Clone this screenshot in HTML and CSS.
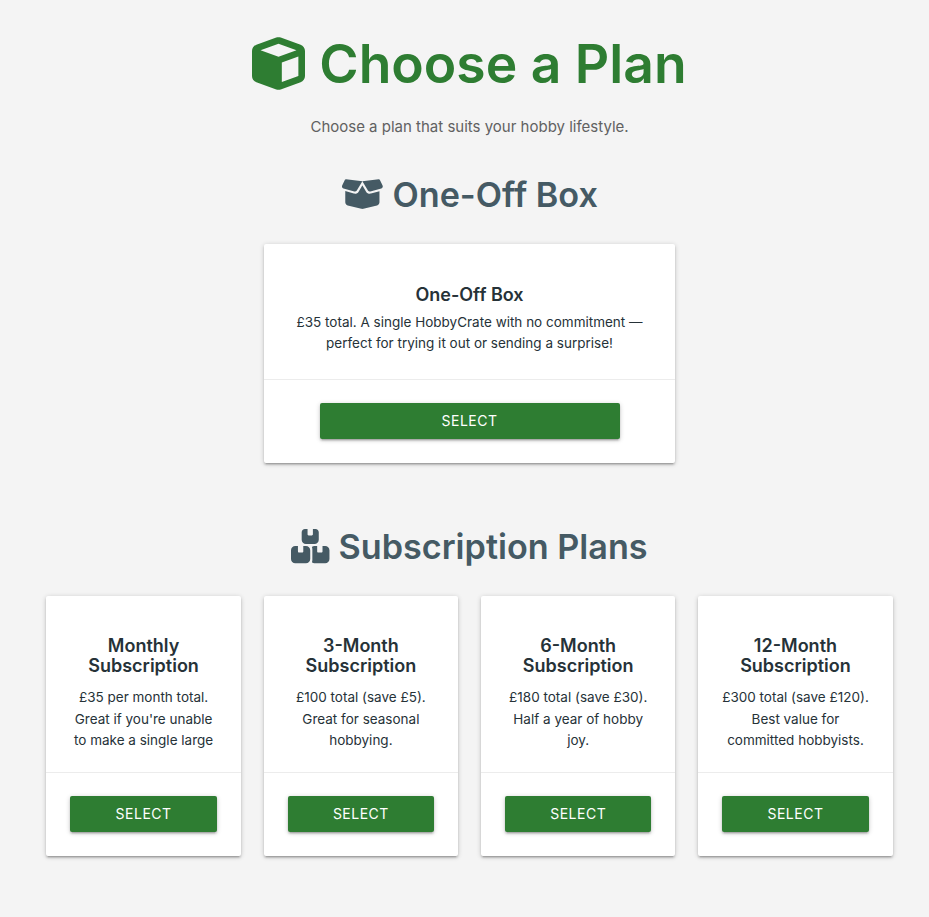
FILE: index.html
```html
<!DOCTYPE html>
<html lang="en">
<head>
<meta charset="utf-8">
<title>Choose a Plan</title>
<link rel="stylesheet" href="styles.css">
</head>
<body>
<main class="container">
<h1><svg class="icon cube" viewBox="0 0 512 512"><path d="M234.500 5.700c13.900-5 29.100-5 43.100 0l192 68.600C495 83.400 512 107.500 512 134.600l0 242.900c0 27-17 51.200-42.500 60.300l-192 68.600c-13.900 5-29.100 5-43.100 0l-192-68.600C17 428.600 0 404.500 0 377.400L0 134.600c0-27 17-51.200 42.500-60.300l192-68.600zM256 66L82.300 128 256 190l173.700-62L256 66zm32 368.600l160-57.100 0-188L288 246.600l0 188z"/></svg> Choose a Plan</h1>
<p class="lead">Choose a plan that suits your hobby lifestyle.</p>
<section>
<h2><svg class="icon open" viewBox="0 0 640 512"><path d="M58.900 42.100c3-6.100 9.600-9.600 16.300-8.700L320 64 564.800 33.400c6.700-.8 13.300 2.700 16.300 8.700l41.700 83.400c9 17.900-.6 39.600-19.800 45.100L439.600 217.300c-13.900 4-28.800-1.900-36.200-14.300L320 64 236.600 203c-7.400 12.400-22.300 18.300-36.200 14.300L37.100 170.600c-19.300-5.500-28.800-27.200-19.800-45.100L58.900 42.100zM321.100 128l54.900 91.400c14.900 24.800 44.600 36.600 72.500 28.600L576 211.600l0 167c0 22-15 41.200-36.400 46.600l-204.100 51c-10.200 2.600-20.900 2.600-31 0l-204.100-51C79 419.700 64 400.500 64 378.500l0-167L191.600 248c27.800 8 57.600-3.800 72.500-28.600L318.900 128l2.200 0z"/></svg> One-Off Box</h2>
<div class="grid single">
<article class="card"><div class="content"><h3>One-Off Box</h3><p>£35 total. A single HobbyCrate with no commitment — perfect for trying it out or sending a surprise!</p></div><div class="action"><button>Select</button></div></article>
</div>
</section>
<section class="plans">
<h2><svg class="icon boxes" viewBox="0 0 576 512"><path d="M248 0L208 0c-26.500 0-48 21.500-48 48l0 112c0 35.300 28.700 64 64 64l128 0c35.300 0 64-28.700 64-64l0-112c0-26.500-21.500-48-48-48L328 0l0 80c0 8.800-7.200 16-16 16l-48 0c-8.800 0-16-7.200-16-16l0-80zM64 256c-35.300 0-64 28.700-64 64L0 448c0 35.300 28.700 64 64 64l160 0c35.300 0 64-28.700 64-64l0-128c0-35.300-28.700-64-64-64l-40 0 0 80c0 8.800-7.200 16-16 16l-48 0c-8.800 0-16-7.200-16-16l0-80-40 0zM352 512l160 0c35.300 0 64-28.700 64-64l0-128c0-35.300-28.700-64-64-64l-40 0 0 80c0 8.800-7.200 16-16 16l-48 0c-8.800 0-16-7.200-16-16l0-80-40 0c-15 0-28.800 5.100-39.700 13.800 4.900 10.400 7.700 22 7.700 34.200l0 160c0 12.200-2.800 23.800-7.700 34.200C323.200 506.900 337 512 352 512z"/></svg> Subscription Plans</h2>
<div class="grid">
<article class="card"><div class="content"><h3>Monthly Subscription</h3><p>£35 per month total. Great if you're unable to make a single large</p></div><div class="action"><button>Select</button></div></article>
<article class="card"><div class="content"><h3>3-Month Subscription</h3><p>£100 total (save £5). Great for seasonal hobbying.</p></div><div class="action"><button>Select</button></div></article>
<article class="card"><div class="content"><h3>6-Month Subscription</h3><p>£180 total (save £30). Half a year of hobby joy.</p></div><div class="action"><button>Select</button></div></article>
<article class="card"><div class="content"><h3>12-Month Subscription</h3><p>£300 total (save £120). Best value for committed hobbyists.</p></div><div class="action"><button>Select</button></div></article>
</div>
</section>
</main>
</body>
</html>
```
FILE: styles.css
```css
* { box-sizing: border-box; }
body { margin: 0; background: #f4f4f4; color: #263238; font: 15px/1.5 Inter, sans-serif; text-align: center; }
.container { width: 846.4px; margin: 0 36px 0 46.34px; padding-bottom: 40px; }
h1, h2, h3, p { margin: 0; }
h1 { padding-top: 32px; font-size: 53.4px; line-height: 64px; font-weight: 600; color: #2e7d32; }
.icon { height: 1em; fill: currentColor; vertical-align: -.125em; overflow: visible; }
.cube { height: 53px; vertical-align: -.125em; margin: 0 .7px 0 -.3px; }
.lead { margin-top: 20px; line-height: 22px; color: #616161; }
h2 { margin-top: 36px; font-size: 34.2px; line-height: 42px; font-weight: 600; color: #455a64; }
.grid { display: grid; grid-template-columns: repeat(4, 1fr); gap: 22.8px; margin-top: 28px; }
.card { background: #fff; border-radius: 2px; box-shadow: 0 2px 2px rgba(0,0,0,.14), 0 3px 1px -2px rgba(0,0,0,.12), 0 1px 5px rgba(0,0,0,.2); }
.single { grid-template-columns: 411px; justify-content: center; }
.content { height: 176px; padding: 40px 23.5px 0; }
.single .content { height: 135px; padding-top: 41px; }
h3 { font-size: 18px; line-height: 20px; font-weight: 600; }
.content p { margin-top: 11px; font-size: 13.5px; line-height: 21.5px; }
.single .content p { margin-top: 7px; line-height: 21px; }
.action { height: 84px; padding: 23px 24px; border-top: 1px solid rgba(160,160,160,.2); }
button { display: block; width: 100%; max-width: 300px; height: 36px; margin: 0 auto; padding: 0; border: 0; border-radius: 2px; background: #2e7d32; color: #fff; font: 14px/36px Inter, sans-serif; letter-spacing: .5px; text-transform: uppercase; box-shadow: 0 2px 2px rgba(0,0,0,.14), 0 3px 1px -2px rgba(0,0,0,.12), 0 1px 5px rgba(0,0,0,.2); }
.plans h2 { margin-top: 63px; }
```
